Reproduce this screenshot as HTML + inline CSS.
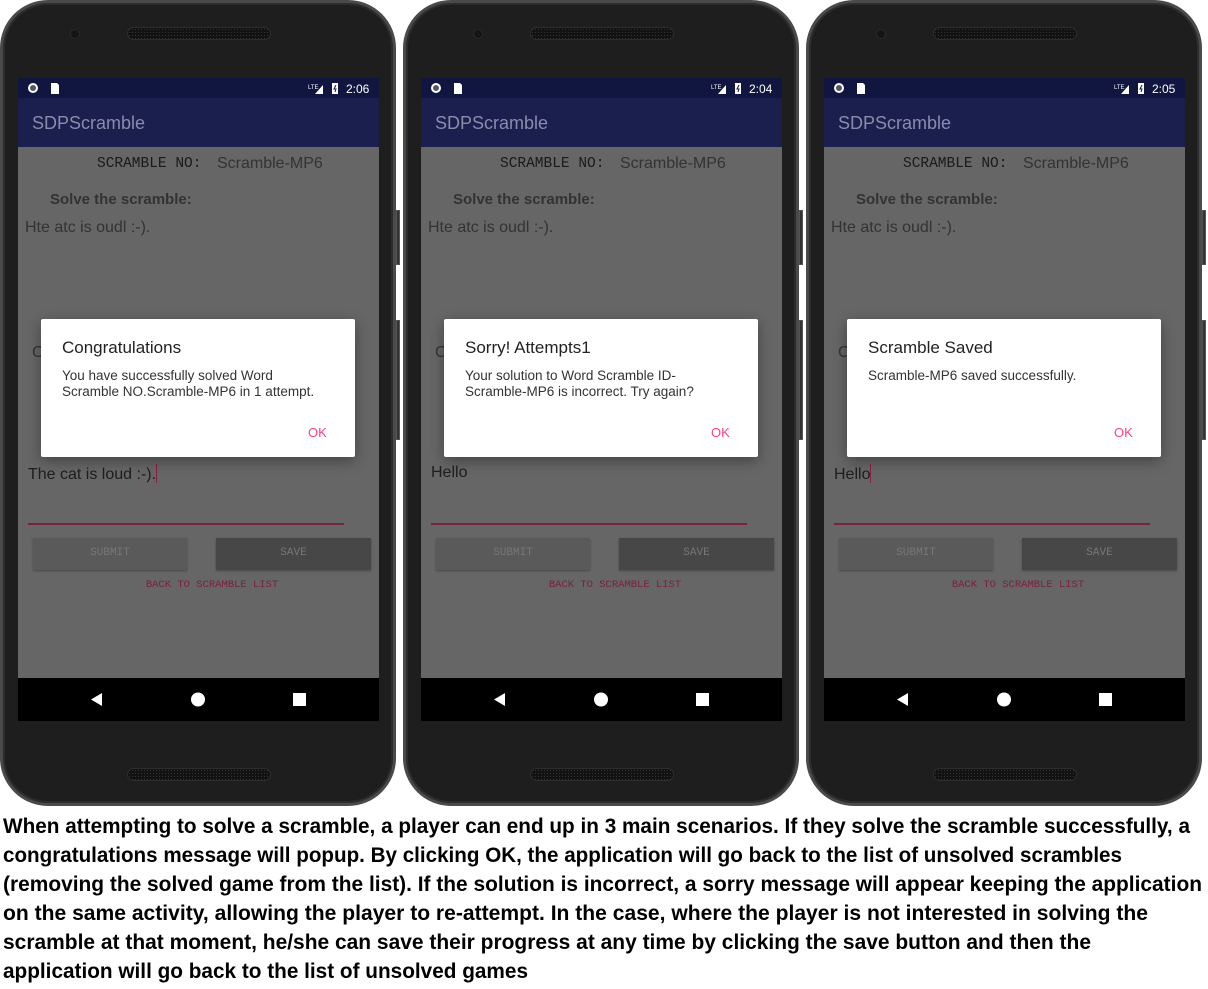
<!DOCTYPE html>
<html><head><meta charset="utf-8"><style>
*{margin:0;padding:0;box-sizing:border-box}
body{width:1208px;height:989px;background:#fff;position:relative;overflow:hidden;font-family:"Liberation Sans",sans-serif}
.ph{position:absolute;top:0;width:397px;height:807px}
.body{position:absolute;left:0;top:0;width:396px;height:806px;border-radius:48px;background:#1e1e1e;border:3px solid #4a4a4a;box-shadow:inset 0 0 0 2px #2c2c2c}
.btn1,.btn2{position:absolute;left:396px;width:4px;background:#333;border:1px solid #555}
.btn1{top:210px;height:55px}.btn2{top:320px;height:120px}
.ear{position:absolute;left:127px;width:144px;height:13px;border-radius:7px;background:#121212;border:1px solid #2e2e2e;background-image:radial-gradient(#333 0.6px,transparent 0.8px);background-size:3px 3px}
.cam{position:absolute;left:70px;top:29px;width:10px;height:10px;border-radius:50%;background:#151515;border:1px solid #2a2a2a}
.scr{position:absolute;left:18px;top:78px;width:361px;height:643px;background:#666;overflow:hidden}
.sb{position:absolute;left:0;top:0;width:361px;height:20px;background:#111640}
.tb{position:absolute;left:0;top:20px;width:361px;height:49px;background:#1a1f4e;color:#8a8cab;font-size:18px;line-height:51px;padding-left:14px}
.t{position:absolute;white-space:nowrap}
.mono{font-family:"Liberation Mono",monospace}
.dlg{position:absolute;left:23px;top:241px;width:314px;height:138px;background:#fff;border-radius:2px;box-shadow:0 4px 14px rgba(0,0,0,.35)}
.nav{position:absolute;left:0;top:600px;width:361px;height:43px;background:#000}
</style></head><body>

<div class="ph" style="left:0">
<div class="body"></div><div class="btn1"></div><div class="btn2"></div>
<div class="cam"></div><div class="ear" style="top:27px"></div><div class="ear" style="top:768px"></div>
<div class="scr">
<div class="sb"><svg width="361" height="20" style="position:absolute;left:0;top:0"><circle cx="15" cy="10" r="5" fill="#fff"/><circle cx="15" cy="10" r="3" fill="#556"/><path d="M33 5h6l2 2v9h-8z" fill="#fff"/><text x="290" y="11" font-size="6" fill="#fff" font-family="Liberation Sans">LTE</text><path d="M297 16l8-9v9z" fill="#fff"/><rect x="314" y="5" width="6" height="11" fill="#fff"/><path d="M318 7l-2 4h2l-1 3" stroke="#111640" stroke-width="1" fill="none"/><text x="328" y="15" font-size="12" fill="#fff" font-family="Liberation Sans">2:06</text></svg></div>
<div class="tb">SDPScramble</div>
<div class="t mono" style="left:79px;top:78px;font-size:14.5px;color:#1a1a1a">SCRAMBLE NO:</div>
<div class="t" style="left:199px;top:77px;font-size:16px;color:#333">Scramble-MP6</div>
<div class="t" style="left:32px;top:113px;font-size:15px;font-weight:bold;color:#333">Solve the scramble:</div>
<div class="t" style="left:7px;top:141px;font-size:16px;color:#333">Hte atc is oudl :-).</div>
<div class="t" style="left:14px;top:266px;font-size:16px;color:#333">C</div>
<div class="t" style="left:10px;top:386px;font-size:16px;color:#1e1e1e">The cat is loud :-).<span style="display:inline-block;width:1px;height:19px;background:#8a1f44;vertical-align:-4px"></span></div>
<div style="position:absolute;left:10px;top:445px;width:316px;height:2px;background:#7a2040"></div>
<div style="position:absolute;left:15px;top:460px;width:154px;height:32px;background:#5a5a5a;box-shadow:0 1px 2px rgba(0,0,0,.3)"></div>
<div style="position:absolute;left:198px;top:460px;width:155px;height:32px;background:#474747;box-shadow:0 1px 2px rgba(0,0,0,.3)"></div>
<div class="t mono" style="left:15px;width:154px;text-align:center;top:469px;font-size:11px;color:#777">SUBMIT</div>
<div class="t mono" style="left:198px;width:155px;text-align:center;top:469px;font-size:11px;color:#777">SAVE</div>
<div class="t mono" style="left:0;width:388px;text-align:center;top:501px;font-size:10.5px;color:#7a2040">BACK TO SCRAMBLE LIST</div>
<div class="dlg">
<div class="t" style="left:21px;top:19px;font-size:17px;color:#222">Congratulations</div>
<div class="t" style="left:21px;top:49px;font-size:13.5px;color:#333;line-height:16px">You have successfully solved Word<br>Scramble NO.Scramble-MP6 in 1 attempt.</div>
<div class="t" style="left:267px;top:106px;font-size:13px;color:#ff4081">OK</div>
</div>
<div class="nav"><svg width="361" height="43"><path d="M84 15v13l-11-6.5z" fill="#fff"/><circle cx="180" cy="21.5" r="7" fill="#fff"/><rect x="275" y="15" width="13" height="13" fill="#fff"/></svg></div>
</div>
</div>

<div class="ph" style="left:403px">
<div class="body"></div><div class="btn1"></div><div class="btn2"></div>
<div class="cam"></div><div class="ear" style="top:27px"></div><div class="ear" style="top:768px"></div>
<div class="scr">
<div class="sb"><svg width="361" height="20" style="position:absolute;left:0;top:0"><circle cx="15" cy="10" r="5" fill="#fff"/><circle cx="15" cy="10" r="3" fill="#556"/><path d="M33 5h6l2 2v9h-8z" fill="#fff"/><text x="290" y="11" font-size="6" fill="#fff" font-family="Liberation Sans">LTE</text><path d="M297 16l8-9v9z" fill="#fff"/><rect x="314" y="5" width="6" height="11" fill="#fff"/><path d="M318 7l-2 4h2l-1 3" stroke="#111640" stroke-width="1" fill="none"/><text x="328" y="15" font-size="12" fill="#fff" font-family="Liberation Sans">2:04</text></svg></div>
<div class="tb">SDPScramble</div>
<div class="t mono" style="left:79px;top:78px;font-size:14.5px;color:#1a1a1a">SCRAMBLE NO:</div>
<div class="t" style="left:199px;top:77px;font-size:16px;color:#333">Scramble-MP6</div>
<div class="t" style="left:32px;top:113px;font-size:15px;font-weight:bold;color:#333">Solve the scramble:</div>
<div class="t" style="left:7px;top:141px;font-size:16px;color:#333">Hte atc is oudl :-).</div>
<div class="t" style="left:14px;top:266px;font-size:16px;color:#333">C</div>
<div class="t" style="left:10px;top:386px;font-size:16px;color:#1e1e1e">Hello</div>
<div style="position:absolute;left:10px;top:445px;width:316px;height:2px;background:#7a2040"></div>
<div style="position:absolute;left:15px;top:460px;width:154px;height:32px;background:#5a5a5a;box-shadow:0 1px 2px rgba(0,0,0,.3)"></div>
<div style="position:absolute;left:198px;top:460px;width:155px;height:32px;background:#474747;box-shadow:0 1px 2px rgba(0,0,0,.3)"></div>
<div class="t mono" style="left:15px;width:154px;text-align:center;top:469px;font-size:11px;color:#777">SUBMIT</div>
<div class="t mono" style="left:198px;width:155px;text-align:center;top:469px;font-size:11px;color:#777">SAVE</div>
<div class="t mono" style="left:0;width:388px;text-align:center;top:501px;font-size:10.5px;color:#7a2040">BACK TO SCRAMBLE LIST</div>
<div class="dlg">
<div class="t" style="left:21px;top:19px;font-size:17px;color:#222">Sorry! Attempts1</div>
<div class="t" style="left:21px;top:49px;font-size:13.5px;color:#333;line-height:16px">Your solution to Word Scramble ID-<br>Scramble-MP6 is incorrect. Try again?</div>
<div class="t" style="left:267px;top:106px;font-size:13px;color:#ff4081">OK</div>
</div>
<div class="nav"><svg width="361" height="43"><path d="M84 15v13l-11-6.5z" fill="#fff"/><circle cx="180" cy="21.5" r="7" fill="#fff"/><rect x="275" y="15" width="13" height="13" fill="#fff"/></svg></div>
</div>
</div>

<div class="ph" style="left:806px">
<div class="body"></div><div class="btn1"></div><div class="btn2"></div>
<div class="cam"></div><div class="ear" style="top:27px"></div><div class="ear" style="top:768px"></div>
<div class="scr">
<div class="sb"><svg width="361" height="20" style="position:absolute;left:0;top:0"><circle cx="15" cy="10" r="5" fill="#fff"/><circle cx="15" cy="10" r="3" fill="#556"/><path d="M33 5h6l2 2v9h-8z" fill="#fff"/><text x="290" y="11" font-size="6" fill="#fff" font-family="Liberation Sans">LTE</text><path d="M297 16l8-9v9z" fill="#fff"/><rect x="314" y="5" width="6" height="11" fill="#fff"/><path d="M318 7l-2 4h2l-1 3" stroke="#111640" stroke-width="1" fill="none"/><text x="328" y="15" font-size="12" fill="#fff" font-family="Liberation Sans">2:05</text></svg></div>
<div class="tb">SDPScramble</div>
<div class="t mono" style="left:79px;top:78px;font-size:14.5px;color:#1a1a1a">SCRAMBLE NO:</div>
<div class="t" style="left:199px;top:77px;font-size:16px;color:#333">Scramble-MP6</div>
<div class="t" style="left:32px;top:113px;font-size:15px;font-weight:bold;color:#333">Solve the scramble:</div>
<div class="t" style="left:7px;top:141px;font-size:16px;color:#333">Hte atc is oudl :-).</div>
<div class="t" style="left:14px;top:266px;font-size:16px;color:#333">C</div>
<div class="t" style="left:10px;top:386px;font-size:16px;color:#1e1e1e">Hello<span style="display:inline-block;width:1px;height:19px;background:#8a1f44;vertical-align:-4px"></span></div>
<div style="position:absolute;left:10px;top:445px;width:316px;height:2px;background:#7a2040"></div>
<div style="position:absolute;left:15px;top:460px;width:154px;height:32px;background:#5a5a5a;box-shadow:0 1px 2px rgba(0,0,0,.3)"></div>
<div style="position:absolute;left:198px;top:460px;width:155px;height:32px;background:#474747;box-shadow:0 1px 2px rgba(0,0,0,.3)"></div>
<div class="t mono" style="left:15px;width:154px;text-align:center;top:469px;font-size:11px;color:#777">SUBMIT</div>
<div class="t mono" style="left:198px;width:155px;text-align:center;top:469px;font-size:11px;color:#777">SAVE</div>
<div class="t mono" style="left:0;width:388px;text-align:center;top:501px;font-size:10.5px;color:#7a2040">BACK TO SCRAMBLE LIST</div>
<div class="dlg">
<div class="t" style="left:21px;top:19px;font-size:17px;color:#222">Scramble Saved</div>
<div class="t" style="left:21px;top:49px;font-size:13.5px;color:#333;line-height:16px">Scramble-MP6 saved successfully.</div>
<div class="t" style="left:267px;top:106px;font-size:13px;color:#ff4081">OK</div>
</div>
<div class="nav"><svg width="361" height="43"><path d="M84 15v13l-11-6.5z" fill="#fff"/><circle cx="180" cy="21.5" r="7" fill="#fff"/><rect x="275" y="15" width="13" height="13" fill="#fff"/></svg></div>
</div>
</div>

<svg width="1208" height="181" style="position:absolute;left:0;top:808px" font-family="Liberation Sans, sans-serif" font-weight="bold" font-size="21" fill="#000">
<text x="3" y="25" textLength="1187" lengthAdjust="spacingAndGlyphs">When attempting to solve a scramble, a player can end up in 3 main scenarios. If they solve the scramble successfully, a</text>
<text x="3" y="54" textLength="1119" lengthAdjust="spacingAndGlyphs">congratulations message will popup. By clicking OK, the application will go back to the list of unsolved scrambles</text>
<text x="3" y="83" textLength="1199" lengthAdjust="spacingAndGlyphs">(removing the solved game from the list). If the solution is incorrect, a sorry message will appear keeping the application</text>
<text x="3" y="112" textLength="1145" lengthAdjust="spacingAndGlyphs">on the same activity, allowing the player to re-attempt. In the case, where the player is not interested in solving the</text>
<text x="3" y="141" textLength="1088" lengthAdjust="spacingAndGlyphs">scramble at that moment, he/she can save their progress at any time by clicking the save button and then the</text>
<text x="3" y="170" textLength="525" lengthAdjust="spacingAndGlyphs">application will go back to the list of unsolved games</text>
</svg>
</body></html>
